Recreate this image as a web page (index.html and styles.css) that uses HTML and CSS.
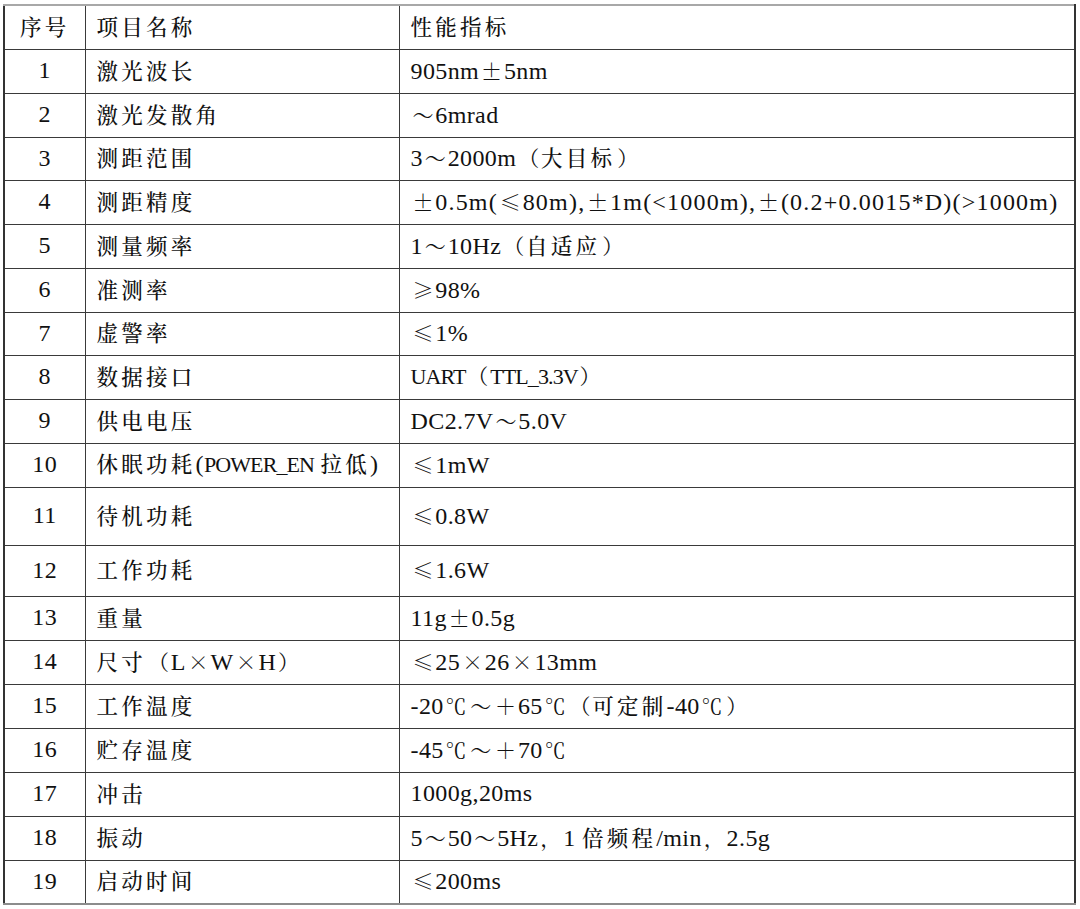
FILE: index.html
```html
<!DOCTYPE html>
<html lang="zh-CN">
<head>
<meta charset="utf-8">
<title>性能指标</title>
<link rel="stylesheet" href="styles.css">
</head>
<body>
<table class="spec">
  <colgroup>
    <col class="col-no">
    <col class="col-name">
    <col class="col-val">
  </colgroup>
  <thead>
    <tr class="row-head">
      <th class="no"><span class="c">序号</span></th>
      <th class="name"><span class="c">项目名称</span></th>
      <th class="val"><span class="c">性能指标</span></th>
    </tr>
  </thead>
  <tbody>
    <tr><td class="no">1</td><td class="name"><span class="c">激光波长</span></td><td class="val">905nm<span class="fw">±</span>5nm</td></tr>
    <tr><td class="no">2</td><td class="name"><span class="c">激光发散角</span></td><td class="val"><span class="fw">～</span>6mrad</td></tr>
    <tr class="row-short"><td class="no">3</td><td class="name"><span class="c">测距范围</span></td><td class="val">3<span class="fw">～</span>2000m<span class="fw">（</span><span class="c">大目标</span><span class="fw">）</span></td></tr>
    <tr><td class="no">4</td><td class="name"><span class="c">测距精度</span></td><td class="val wide"><span class="fw">±</span>0.5m(<span class="fw">≤</span>80m),<span class="fw">±</span>1m(&lt;1000m),<span class="fw">±</span>(0.2+0.0015*D)(&gt;1000m)</td></tr>
    <tr><td class="no">5</td><td class="name"><span class="c">测量频率</span></td><td class="val">1<span class="fw">～</span>10Hz<span class="fw">（</span><span class="c">自适应</span><span class="fw">）</span></td></tr>
    <tr><td class="no">6</td><td class="name"><span class="c">准测率</span></td><td class="val"><span class="fw">≥</span>98%</td></tr>
    <tr class="row-short"><td class="no">7</td><td class="name"><span class="c">虚警率</span></td><td class="val"><span class="fw">≤</span>1%</td></tr>
    <tr><td class="no">8</td><td class="name"><span class="c">数据接口</span></td><td class="val"><span class="u">UART</span><span class="fw">（</span><span class="u">TTL_3.3V</span><span class="fw">）</span></td></tr>
    <tr><td class="no">9</td><td class="name"><span class="c">供电电压</span></td><td class="val">DC2.7V<span class="fw">～</span>5.0V</td></tr>
    <tr><td class="no">10</td><td class="name"><span class="c">休眠功耗</span>(<span class="u">POWER_EN</span> <span class="c">拉低</span>)</td><td class="val"><span class="fw">≤</span>1mW</td></tr>
    <tr class="row-tall"><td class="no">11</td><td class="name"><span class="c">待机功耗</span></td><td class="val"><span class="fw">≤</span>0.8W</td></tr>
    <tr class="row-mid"><td class="no">12</td><td class="name"><span class="c">工作功耗</span></td><td class="val"><span class="fw">≤</span>1.6W</td></tr>
    <tr><td class="no">13</td><td class="name"><span class="c">重量</span></td><td class="val">11g<span class="fw">±</span>0.5g</td></tr>
    <tr><td class="no">14</td><td class="name"><span class="c">尺寸</span><span class="fw">（</span>L<span class="fw">×</span>W<span class="fw">×</span>H<span class="fw">）</span></td><td class="val"><span class="fw">≤</span>25<span class="fw">×</span>26<span class="fw">×</span>13mm</td></tr>
    <tr><td class="no">15</td><td class="name"><span class="c">工作温度</span></td><td class="val">-20<span class="fw">℃</span><span class="fw">～</span><span class="fw">＋</span>65<span class="fw">℃</span><span class="fw">（</span><span class="c">可定制</span>-40<span class="fw">℃</span><span class="fw">）</span></td></tr>
    <tr><td class="no">16</td><td class="name"><span class="c">贮存温度</span></td><td class="val">-45<span class="fw">℃</span><span class="fw">～</span><span class="fw">＋</span>70<span class="fw">℃</span></td></tr>
    <tr><td class="no">17</td><td class="name"><span class="c">冲击</span></td><td class="val">1000g,20ms</td></tr>
    <tr><td class="no">18</td><td class="name"><span class="c">振动</span></td><td class="val">5<span class="fw">～</span>50<span class="fw">～</span>5Hz<span class="fw">，</span>1 <span class="c">倍频程</span>/min<span class="fw">，</span>2.5g</td></tr>
    <tr><td class="no">19</td><td class="name"><span class="c">启动时间</span></td><td class="val"><span class="fw">≤</span>200ms</td></tr>
  </tbody>
</table>
</body>
</html>
```
FILE: styles.css
```css
html, body {
  margin: 0;
  padding: 0;
  background: #ffffff;
}

body {
  padding: 4px 0 0 3px;
}

.spec {
  border-collapse: collapse;
  table-layout: fixed;
  width: 1073px;
  color: #111111;
  font-family: "Liberation Serif", "Noto Serif CJK SC", "Noto Sans CJK SC", serif;
  font-size: 24px;
  letter-spacing: 0.4px;
  border-top: 2px solid #a8a8a8;
  border-bottom: 2px solid #8c8c8c;
  border-left: 2px solid #333333;
  border-right: 2px solid #333333;
}

.col-no { width: 81px; }
.col-name { width: 314px; }
.col-val { width: auto; }

.spec th,
.spec td {
  border: 1px solid #3a3a3a;
  padding: 0 0 2px 11px;
  vertical-align: middle;
  font-weight: normal;
  text-align: left;
  white-space: nowrap;
  line-height: 26px;
}

.spec th.no,
.spec td.no {
  text-align: center;
  padding: 0 0 2px 0;
}

.spec tr { height: 44px; }
.spec tr.row-head { height: 44px; }
.spec tr.row-short { height: 43px; }
.spec tr.row-tall { height: 58px; }
.spec tr.row-mid { height: 51px; }

.c {
  font-family: "Noto Serif CJK SC", "Noto Sans CJK SC", sans-serif;
  font-size: 21.5px;
  font-weight: 500;
  letter-spacing: 3.25px;
}

.u {
  font-size: 22px;
  letter-spacing: -0.9px;
}

.wide {
  letter-spacing: 1.2px;
}

.fw {
  display: inline-block;
  width: 24.75px;
  text-align: center;
  font-family: "Noto Serif CJK SC", "Noto Sans CJK SC", sans-serif;
  font-size: 21px;
  letter-spacing: 0;
}
```
